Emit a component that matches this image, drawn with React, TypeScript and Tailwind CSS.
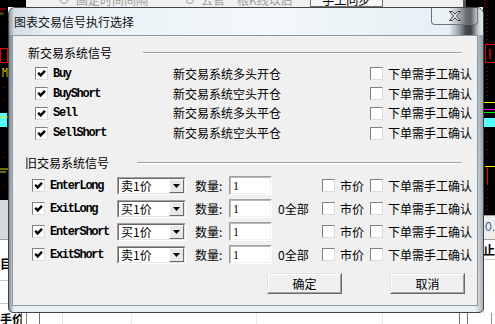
const CJK = "font-['Noto_Sans_CJK_SC',sans-serif]";
const MONO = "font-['Liberation_Mono',monospace] font-bold text-[12px] tracking-[-1.3px] text-black";

function Check({ on = false }: { on?: boolean }) {
  return (
    <div className="flex h-[13px] w-[13px] shrink-0 items-center justify-center border border-t-[#808080] border-l-[#808080] border-b-[#dcdcdc] border-r-[#dcdcdc] bg-white">
      {on && (
        <svg width="9" height="9" viewBox="0 0 9 9">
          <path d="M1.2 3.8 L3.6 6.4 L8 1.8" fill="none" stroke="#000" strokeWidth="2.4" />
        </svg>
      )}
    </div>
  );
}

function Combo({ value }: { value: string }) {
  return (
    <div className="flex h-[18px] w-[69px] shrink-0 border border-t-[#a0a0a0] border-l-[#a0a0a0] border-b-white border-r-white">
      <div className="flex flex-1 items-center border border-t-[#696969] border-l-[#696969] border-b-[#e3e3e3] border-r-[#e3e3e3] bg-white">
        <span className={`${CJK} flex-1 pl-[2px] text-[12px] leading-none text-black`}>{value}</span>
        <div className="flex h-full w-[15px] items-center justify-center border border-t-white border-l-white border-b-[#696969] border-r-[#696969] bg-[#e8e8e8]">
          <svg width="7" height="4" viewBox="0 0 7 4">
            <path d="M0 0 H7 L3.5 4 Z" fill="#000" />
          </svg>
        </div>
      </div>
    </div>
  );
}

function Field() {
  return (
    <div className="h-[19px] w-[43px] shrink-0 border border-t-[#a0a0a0] border-l-[#a0a0a0] border-b-white border-r-white">
      <div className="h-full border border-t-[#b8b8b8] border-l-[#b8b8b8] border-b-[#f0f0f0] border-r-[#f0f0f0] bg-white pl-[2px] pt-[2px] font-['Liberation_Serif',serif] text-[12px] leading-[12px] text-black">
        1
      </div>
    </div>
  );
}

function Btn({ label }: { label: string }) {
  return (
    <div className="h-[21px] w-[75px] border border-t-[#e3e3e3] border-l-[#e3e3e3] border-b-[#696969] border-r-[#696969]">
      <div className={`${CJK} flex h-full items-center justify-center border border-t-white border-l-white border-b-[#a0a0a0] border-r-[#a0a0a0] bg-[#f0f0f0] text-[12px] text-black`}>
        {label}
      </div>
    </div>
  );
}

function Header({ text, pl, gap }: { text: string; pl: string; gap: string }) {
  return (
    <div className={`flex h-[14px] items-center pr-[15px] ${pl}`}>
      <span className={`${CJK} text-[12px] leading-none text-black`}>{text}</span>
      <div className={`h-[2px] flex-1 border-t border-b border-t-[#a0a0a0] border-b-white ${gap}`} />
    </div>
  );
}

const NEW_ROWS = [
  { name: "Buy", desc: "新交易系统多头开仓", h: "h-[21px]" },
  { name: "BuyShort", desc: "新交易系统空头开仓", h: "h-[19px]" },
  { name: "Sell", desc: "新交易系统多头平仓", h: "h-[20px]" },
  { name: "SellShort", desc: "新交易系统空头平仓", h: "h-[20px]" },
];

const OLD_ROWS = [
  { name: "EnterLong", price: "卖1价", all: false },
  { name: "ExitLong", price: "买1价", all: true },
  { name: "EnterShort", price: "买1价", all: false },
  { name: "ExitShort", price: "卖1价", all: true },
];

function Dialog() {
  return (
    <div className="absolute left-[8px] top-[7px] flex h-[306px] w-[476px] flex-col rounded-t-[7px] rounded-b-[5px] border border-[#3e454c] bg-[linear-gradient(to_right,rgba(50,56,62,0.55)_0px,rgba(50,56,62,0)_5px,rgba(0,0,0,0)_466px,rgba(60,66,72,0.35)_474px),linear-gradient(to_bottom,#b9c4cc_0%,#d8e2e9_55%,#eaf1f5_100%)]">
      {/* title bar */}
      <div className="flex h-[27px] items-start rounded-t-[6px] bg-[linear-gradient(to_right,#8c9399_0px,#d3dde4_5px,#e9f1f6_40px,#f2f8fb_260px,#e6eff4_440px,#9aa1a6_450px,#45494c_457px,#3c4043_462px,#8e959a_466px,#d0d8de_470px,#dfe6eb_474px)]">
        <span className={`${CJK} ml-[5px] mt-[7px] text-[12px] leading-[14px] text-[#111]`}>图表交易信号执行选择</span>
        <div className="ml-auto mr-[5px] flex h-[17px] w-[47px] items-center justify-center rounded-b-[4px] border border-t-0 border-[#6a747d] bg-white/20">
          <svg width="12" height="10" viewBox="0 0 12 10">
            <path d="M0.5 0.5 H3.3 L6 3.2 L8.7 0.5 H11.5 L7.5 5 L11.5 9.5 H8.7 L6 6.8 L3.3 9.5 H0.5 L4.5 5 Z" fill="#e4e4e4" stroke="#3c3c3c" strokeWidth="1" strokeLinejoin="round" />
          </svg>
        </div>
      </div>

      {/* client area */}
      <div className="ml-[3px] mr-[5px] flex h-[271px] flex-col border border-[#8b98a3] bg-[#f0f0f0]">
        <div className="mt-[10px]">
          <Header text="新交易系统信号" pl="pl-[15px]" gap="ml-[31px]" />
        </div>
        <div className="mt-[3px] flex flex-col pl-[22px]">
          {NEW_ROWS.map((r) => (
            <div key={r.name} className={`flex items-center ${r.h}`}>
              <Check on />
              <span className={`${MONO} ml-[5px] w-[120px]`}>{r.name}</span>
              <span className={`${CJK} w-[197px] text-[12px] text-black`}>{r.desc}</span>
              <Check />
              <span className={`${CJK} ml-[5px] text-[12px] text-black`}>下单需手工确认</span>
            </div>
          ))}
        </div>

        <div className="mt-[13px]">
          <Header text="旧交易系统信号" pl="pl-[12px]" gap="ml-[28px]" />
        </div>
        <div className="mt-[4px] flex flex-col pl-[19px]">
          {OLD_ROWS.map((r) => (
            <div key={r.name} className="flex h-[23px] items-center">
              <Check on />
              <span className={`${MONO} ml-[5px] w-[67px]`}>{r.name}</span>
              <Combo value={r.price} />
              <span className={`${CJK} ml-[9px] w-[34px] text-[12px] text-black`}>数量:</span>
              <Field />
              <span className={`${CJK} ml-[6px] w-[44px] text-[12px] text-black`}>{r.all ? "0全部" : ""}</span>
              <Check />
              <span className={`${CJK} ml-[5px] w-[30px] text-[12px] text-black`}>市价</span>
              <Check />
              <span className={`${CJK} ml-[5px] text-[12px] text-black`}>下单需手工确认</span>
            </div>
          ))}
        </div>

        <div className="mt-[7px] flex justify-end gap-[48px] pr-[12px]">
          <Btn label="确定" />
          <Btn label="取消" />
        </div>
      </div>
    </div>
  );
}

function Backdrop() {
  return (
    <div className="flex h-full w-full flex-col">
      {/* strip above the dialog: only the lower half of the app's toolbar shows */}
      <div className="flex h-[7px] overflow-hidden">
        <div className="w-[26px] bg-black" />
        <div className="flex flex-1 items-start bg-[#f0f0f0]">
          <div className={`${CJK} -mt-[7px] ml-[34px] flex h-[14px] items-center gap-[8px] text-[12px] text-[#9c9c9c]`}>
            <span className="h-[8px] w-[8px] rounded-full border border-[#9c9c9c]" />
            <span>固定时间间隔</span>
          </div>
          <div className={`${CJK} -mt-[7px] ml-[38px] flex h-[14px] items-center gap-[7px] text-[12px] text-[#9c9c9c]`}>
            <span className="h-[8px] w-[8px] rounded-full border border-[#9c9c9c]" />
            <span>去官一根K线以后</span>
          </div>
          <div className={`${CJK} -mt-[8px] ml-[17px] flex h-[15px] w-[73px] items-center justify-center border border-[#707070] bg-[#f6f6f6] text-[12px] text-black`}>
            手工同步
          </div>
        </div>
        <div className="w-[3px] bg-[#555]" />
        <div className="w-[29px] bg-black">
          <svg width="29" height="7">
            <path d="M19 0 V7" stroke="#d00" strokeDasharray="1 2" />
          </svg>
        </div>
      </div>

      <div className="flex flex-1">
        {/* left edge of the chart behind */}
        <div className="flex w-[8px] flex-col">
          <svg width="8" height="193" className="bg-black">
            <path d="M0 2 H6 M0 6 H4" stroke="#e00" />
            <path d="M0 7 H3" stroke="#0c0" />
            <rect x="0.5" y="41.5" width="7" height="14" fill="none" stroke="#e00" />
            <path d="M3 61 V70 M3 61 L5 65 L7 61 V70" stroke="#d8c000" fill="none" />
            <path d="M4 80 V81 M4 92 V93 M4 150 V151 M4 178 V179" stroke="#c00" />
            <rect x="0" y="106" width="7" height="14" fill="#5ff" />
            <path d="M0 110 H8" stroke="#dd0" />
            <path d="M0 162 H8 M0 165 H6" stroke="#dd0" />
          </svg>
          <div className="h-[40px] border-b border-[#a0a0a0] bg-[#d8d8d8]" />
          <div className="flex-1 bg-white">
            <div className={`${CJK} mt-[18px] text-[12px] font-bold leading-none text-black`}>目</div>
            <div className="mt-[10px] border-t border-[#c8c8c8]" />
            <div className="mt-[22px] border-t border-[#c8c8c8]" />
          </div>
        </div>

        <div className="flex-1" />

        {/* right edge of the chart behind */}
        <div className="flex w-[12px] flex-col">
          <svg width="12" height="208" className="bg-black">
            <path d="M4 0 V37" stroke="#d00" strokeDasharray="1 3" />
            <rect x="2.5" y="37.5" width="10" height="18" fill="none" stroke="#e00" />
            <path d="M7 42 V52" stroke="#e00" strokeWidth="1.5" />
            <path d="M4 60 V92" stroke="#d00" strokeDasharray="1 3" />
            <path d="M0 95.5 H12" stroke="#ee0" />
            <path d="M0 102.5 H12" stroke="#e0e" />
            <path d="M0 105.5 H12" stroke="#0e0" />
            <rect x="0" y="111" width="12" height="9" fill="#5ff" />
            <path d="M4 126 V150" stroke="#d00" strokeDasharray="1 3" />
            <path d="M2 159.5 H12" stroke="#ee0" />
            <path d="M4.5 160 V178" stroke="#e00" />
            <path d="M4 182 V205" stroke="#d00" strokeDasharray="1 3" />
          </svg>
          <div className="h-[25px] border-y border-[#a0a0a0] bg-[#eeeeee] pl-[2px] font-['Liberation_Sans',sans-serif] text-[12px] leading-[23px] text-[#3a5a8a]">
            0.
          </div>
          <div className={`${CJK} h-[20px] border-b border-[#c8c8c8] bg-white text-[12px] font-bold leading-[20px] text-black`}>
            止
          </div>
          <div className="flex-1 border-l border-[#c8c8c8] bg-white" />
        </div>
      </div>

      {/* strip below the dialog */}
      <div className="flex h-[11px] bg-white">
        <div className={`${CJK} w-[22px] overflow-hidden whitespace-nowrap border-r border-[#606060] text-[12px] font-bold leading-[11px] text-black`}>
          手价
        </div>
        <div className="w-[5px] border-r border-[#808080]" />
        <div className="w-[13px] border-r border-[#707070]" />
        <div className="w-[23px] border-r border-[#e0e0e0]" />
        <div className="w-[69px] border-r border-[#e8e8e8]" />
        <div className="w-[125px] border-r border-[#e8e8e8]" />
        <div className="w-[126px] border-r border-[#e8e8e8]" />
        <div className="w-[77px] border-r border-[#707070]" />
        <div className="w-[8px] border-r border-[#707070]" />
        <div className="w-[24px] border-r border-[#909090]" />
      </div>
    </div>
  );
}

export default function App() {
  return (
    <div className="relative h-[324px] w-[495px] overflow-hidden bg-white">
      <Backdrop />
      <Dialog />
    </div>
  );
}
